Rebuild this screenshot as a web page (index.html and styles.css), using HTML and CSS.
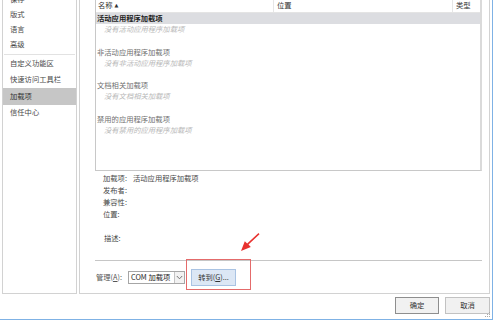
FILE: index.html
```html
<!DOCTYPE html>
<html lang="zh-CN">
<head>
<meta charset="utf-8">
<title>Word 选项 - 加载项</title>
<link rel="stylesheet" href="styles.css">
</head>
<body>
<div class="window">
  <div class="panes">
    <nav class="nav">
      <ul class="nav-list">
        <li class="nav-item">保存</li>
        <li class="nav-item">版式</li>
        <li class="nav-item">语言</li>
        <li class="nav-item">高级</li>
        <li class="nav-sep"></li>
        <li class="nav-item tall">自定义功能区</li>
        <li class="nav-item tall">快速访问工具栏</li>
        <li class="nav-item tall active">加载项</li>
        <li class="nav-item tall">信任中心</li>
      </ul>
    </nav>
    <section class="main">
      <div class="list">
        <div class="list-head">
          <span class="col c-name">名称 <span class="sort">▲</span></span>
          <span class="col c-loc">位置</span>
          <span class="col c-type">类型</span>
        </div>
        <div class="row group sel">活动应用程序加载项</div>
        <div class="row item">没有活动应用程序加载项</div>
        <div class="row"></div>
        <div class="row group">非活动应用程序加载项</div>
        <div class="row item">没有非活动应用程序加载项</div>
        <div class="row"></div>
        <div class="row group">文档相关加载项</div>
        <div class="row item">没有文档相关加载项</div>
        <div class="row"></div>
        <div class="row group">禁用的应用程序加载项</div>
        <div class="row item">没有禁用的应用程序加载项</div>
      </div>
      <div class="details">
        <div class="d-row"><span class="d-label">加载项:</span><span class="d-val">活动应用程序加载项</span></div>
        <div class="d-row"><span class="d-label">发布者:</span><span class="d-val"></span></div>
        <div class="d-row"><span class="d-label">兼容性:</span><span class="d-val"></span></div>
        <div class="d-row"><span class="d-label">位置:</span><span class="d-val"></span></div>
        <div class="d-row desc"><span class="d-label">描述:</span><span class="d-val"></span></div>
      </div>
      <div class="sep"></div>
      <div class="manage">
        <span class="m-label">管理(<u>A</u>):</span>
        <div class="select">
          <span class="select-text">COM 加载项</span>
          <span class="select-btn">
            <svg width="7" height="5" viewBox="0 0 7 5"><polyline points="0.8,1 3.5,3.8 6.2,1" fill="none" stroke="#666" stroke-width="0.9"/></svg>
          </span>
        </div>
        <button class="go">转到(<u>G</u>)...</button>
        <div class="annot-box"></div>
        <svg class="annot-arrow" width="24" height="22" viewBox="0 0 24 22">
          <polygon points="20.5,1 21.5,2.2 10.5,12.6 12.8,15 3,19 6.8,9.2 9.2,11.4" fill="#e8322f"/>
        </svg>
      </div>
    </section>
  </div>
  <div class="footer">
    <button class="btn default">确定</button>
    <button class="btn">取消</button>
    <svg class="grip" width="6" height="6" viewBox="0 0 6 6">
      <rect x="4" y="0" width="1" height="1" fill="#aaa"/>
      <rect x="2" y="2" width="1" height="1" fill="#aaa"/>
      <rect x="4" y="2" width="1" height="1" fill="#aaa"/>
      <rect x="0" y="4" width="1" height="1" fill="#aaa"/>
      <rect x="2" y="4" width="1" height="1" fill="#aaa"/>
      <rect x="4" y="4" width="1" height="1" fill="#aaa"/>
    </svg>
  </div>
</div>
</body>
</html>
```
FILE: styles.css
```css
* { box-sizing: border-box; margin: 0; padding: 0; }
html, body { width: 500px; height: 320px; overflow: hidden; background: #fff; }
body {
  font-family: "Noto Sans CJK SC", "Liberation Sans", sans-serif;
  font-size: 7.3px;
  line-height: 1;
  color: #444;
}
u { text-decoration: underline; }

.window {
  width: 493px;
  height: 320px;
  border-right: 1px solid #7fb2e5;
  border-bottom: 1px solid #7fb2e5;
  display: flex;
  flex-direction: column;
}

.panes {
  display: flex;
  height: 294px;
  padding-left: 2px;
  gap: 2px;
}

/* left navigation */
.nav {
  width: 75px;
  border: 1px solid #d2d2d2;
  border-top: none;
  overflow: hidden;
}
.nav-list { list-style: none; margin-top: -8px; }
.nav-item {
  height: 15px;
  display: flex;
  align-items: center;
  padding-left: 7px;
  color: #4a4a4a;
}
.nav-item.tall { height: 16.5px; }
.nav-item.active { background: #c6c6c6; color: #333; }
.nav-sep { height: 1px; background: #e2e2e2; margin: 2px 1px 0; }

/* main panel */
.main {
  width: 411px;
  border: 1px solid #d2d2d2;
  border-top: none;
  padding: 0 7px 0 15px;
  display: flex;
  flex-direction: column;
}

.list {
  height: 171px;
  border-left: 1px solid #c8c8c8;
  border-right: 2px solid #dadada;
  border-bottom: 1px solid #c8c8c8;
  overflow: hidden;
}
.list-head {
  height: 13px;
  display: flex;
  border-bottom: 1px solid #e4e4e4;
  color: #333;
}
.col { display: flex; align-items: center; padding-left: 2px; padding-bottom: 1px; }
.c-name { width: 178px; border-right: 1px solid #e6e6e6; }
.c-loc { width: 179px; padding-left: 3px; border-right: 1px solid #e6e6e6; }
.c-type { flex: 1; padding-left: 3px; }
.sort { font-size: 5px; margin-left: 2px; font-family: "DejaVu Sans", sans-serif; }

.row {
  height: 11.2px;
  display: flex;
  align-items: center;
  padding-left: 1px;
}
.row.group { color: #707070; }
.row.sel { background: #dcdde1; color: #1e1e1e; font-weight: bold; }
.row.item { padding-left: 8px; color: #b8b8b8; font-style: italic; }

/* details */
.details { padding: 2px 0 0 8px; }
.d-row { height: 12px; display: flex; align-items: center; color: #4a4a4a; }
.d-label { width: 30px; }
.d-row.desc { margin-top: 12px; padding-left: 1px; }

.sep { height: 1px; background: #c6c6c6; margin-top: 15px; }

/* manage row */
.manage {
  position: relative;
  display: flex;
  align-items: center;
  margin-top: 8px;
  height: 17px;
  padding-left: 1px;
}
.m-label { width: 32px; color: #555; }
.m-label u { text-underline-offset: 1px; }
.select {
  width: 57px;
  height: 13px;
  border: 1px solid #a6a6a6;
  display: flex;
  align-items: stretch;
  background: #fff;
}
.select-text {
  flex: 1;
  display: flex;
  align-items: center;
  padding-left: 2px;
  color: #222;
  white-space: nowrap;
}
.select-btn {
  width: 10px;
  border-left: 1px solid #c4c4c4;
  background: #f2f2f2;
  display: flex;
  align-items: center;
  justify-content: center;
}
.go {
  margin-left: 6px;
  width: 45px;
  height: 17px;
  border: 1px solid #a9c3e3;
  background: #dce7f5;
  font: inherit;
  color: #333;
}
.annot-box {
  position: absolute;
  left: 91px;
  top: -10px;
  width: 65px;
  height: 31px;
  border: 1px solid #e46b6b;
}
.annot-arrow {
  position: absolute;
  left: 143px;
  top: -37px;
}

/* footer */
.footer {
  position: relative;
  flex: 1;
  display: flex;
  justify-content: flex-end;
  gap: 6px;
  padding: 3px 2px 0 0;
}
.btn {
  height: 17px;
  width: 45px;
  border: 1px solid #c2c2c2;
  background: #f1f1f1;
  font: inherit;
  color: #333;
}
.btn.default { width: 44px; border: 1px solid #8e8e8e; }
.grip { position: absolute; right: 1px; bottom: 1px; }
```
